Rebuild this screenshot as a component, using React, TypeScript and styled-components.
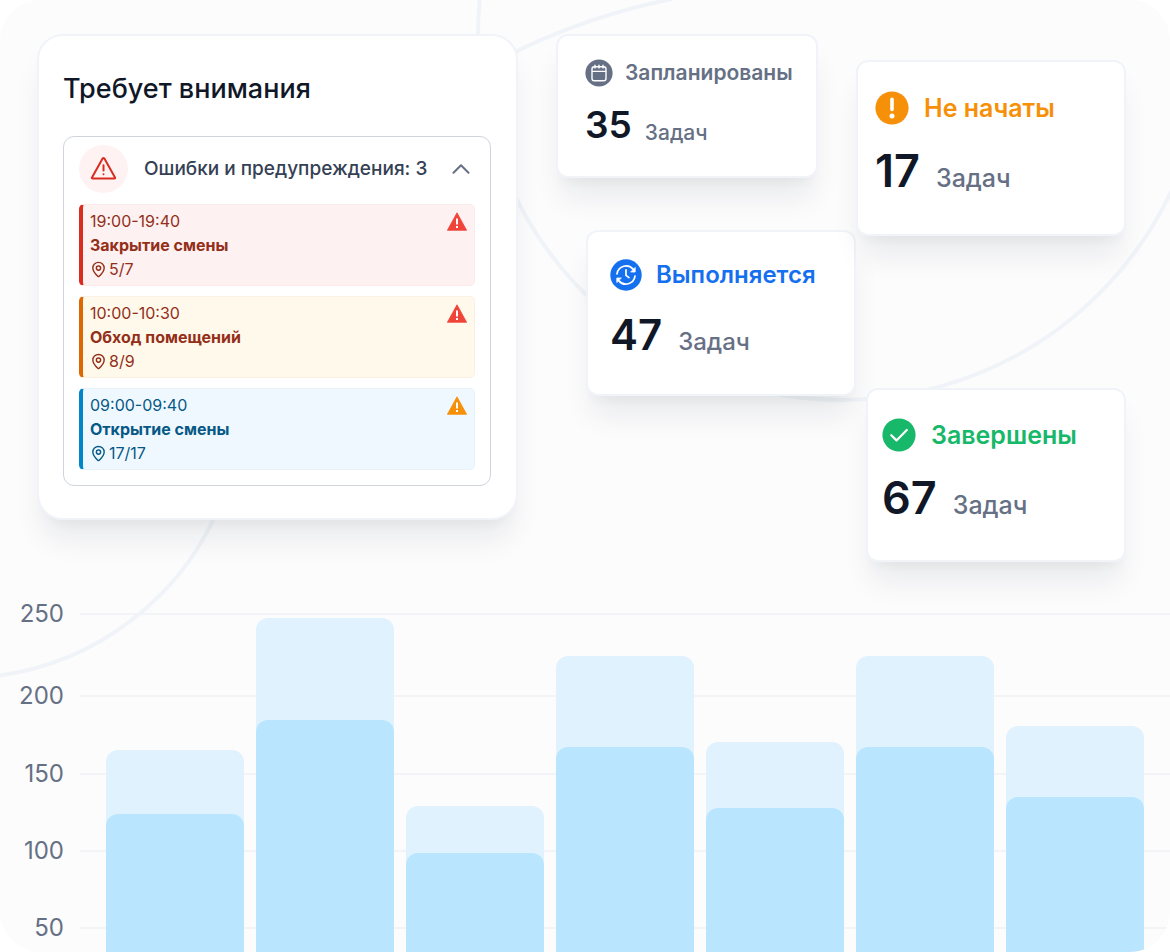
import React, { useState } from "react";
import styled, { createGlobalStyle } from "styled-components";
import { MapPin } from "lucide-react";

const GlobalStyle = createGlobalStyle`
  *, *::before, *::after { box-sizing: border-box; }
  body {
    margin: 0;
    background: #ffffff;
    font-family: Inter, "Noto Sans", sans-serif;
    color: #101828;
  }
  h2, h3, p, ul { margin: 0; padding: 0; font-weight: inherit; }
`;

const Page = styled.main`
  position: relative;
  isolation: isolate;
  min-height: 100vh;
  padding-top: 34px;
  overflow: hidden;
  background: #fcfcfd;
  border-radius: 40px;
`;

const Rings = styled.svg`
  position: absolute;
  top: 0;
  left: 0;
  z-index: -1;
  fill: none;
  stroke: #f0f4f8;
  stroke-width: 4;
`;

const Overview = styled.div`
  display: grid;
  grid-template-columns: 481fr 38fr 300fr 270fr;
  align-items: start;
  padding: 0 44px 0 37px;
`;

const Column = styled.div<{ $col: number; $top?: number; $gap: number }>`
  grid-column: ${(p) => p.$col};
  display: flex;
  flex-direction: column;
  gap: ${(p) => p.$gap}px;
  padding-top: ${(p) => p.$top ?? 0}px;
`;

const Surface = styled.section`
  background: #ffffff;
  border: 2px solid #f0f4f8;
  box-shadow: 0 24px 30px -5px rgba(16, 24, 40, 0.08),
    0 10px 10px -5px rgba(16, 24, 40, 0.03);
`;

const Attention = styled(Surface)`
  padding: 35px 25px 32px 24px;
  border-radius: 26px;
`;

const AttentionTitle = styled.h2`
  margin-bottom: 29px;
  font-size: 27px;
  line-height: 36px;
  font-weight: 500;
`;

const Panel = styled.div`
  padding: 8px 15px 15px;
  border: 1px solid #d0d5dd;
  border-radius: 11px;
`;

const PanelToggle = styled.button`
  display: flex;
  align-items: center;
  gap: 16px;
  width: 100%;
  padding: 0 5px 0 0;
  border: 0;
  background: none;
  color: #344054;
  font: 500 19px/28px Inter, "Noto Sans", sans-serif;
  text-align: left;
  white-space: nowrap;
  cursor: pointer;
`;

const ToggleLabel = styled.span`
  flex: 1;
`;

const AlertBadge = styled.span`
  display: grid;
  place-items: center;
  flex: none;
  width: 49px;
  height: 48px;
  border-radius: 50%;
  background: #fef3f2;
`;

const TaskList = styled.ul`
  display: grid;
  gap: 10px;
  margin-top: 11px;
  list-style: none;
`;

type Tone = "red" | "amber" | "blue";

const tones: Record<Tone, { bg: string; edge: string; bar: string; text: string }> = {
  red: { bg: "#fef1f1", edge: "#fcebe8", bar: "#d92d20", text: "#932f19" },
  amber: { bg: "#fff9eb", edge: "#fbf0e2", bar: "#dc6803", text: "#932f19" },
  blue: { bg: "#f0f8ff", edge: "#e7f2fb", bar: "#0086c9", text: "#065986" },
};

const TaskItem = styled.li<{ $tone: Tone }>`
  display: flex;
  justify-content: space-between;
  padding: 4px 7px;
  border: 1px solid ${(p) => tones[p.$tone].edge};
  border-left: 4px solid ${(p) => tones[p.$tone].bar};
  border-radius: 5px;
  background: ${(p) => tones[p.$tone].bg};
  color: ${(p) => tones[p.$tone].text};
  font-size: 16px;
  line-height: 24px;

  > svg {
    margin-top: 3px;
  }
`;

const TaskName = styled.h3`
  font-size: 16px;
  font-weight: 700;
`;

const TaskPlace = styled.p`
  display: flex;
  align-items: center;
  gap: 2px;
`;

type Size = "small" | "medium" | "large";

const sizes = {
  small: { icon: 28, label: 21, labelLine: 28, value: 37, valueLine: 48, unit: 21, unitLine: 32, headGap: 12, rowGap: 14, gap: 13, align: "flex-end" },
  medium: { icon: 32, label: 24, labelLine: 32, value: 42, valueLine: 52, unit: 24, unitLine: 32, headGap: 14, rowGap: 18, gap: 16, align: "baseline" },
  large: { icon: 34, label: 25, labelLine: 34, value: 45, valueLine: 56, unit: 25, unitLine: 34, headGap: 15, rowGap: 18, gap: 16, align: "baseline" },
};

const StatCard = styled(Surface)<{ $size: Size; $pad: string; $margin?: string }>`
  display: grid;
  gap: ${(p) => sizes[p.$size].rowGap}px;
  margin: ${(p) => p.$margin ?? "0"};
  padding: ${(p) => p.$pad};
  border-radius: 12px;
  white-space: nowrap;
`;

const StatHead = styled.h3<{ $size: Size; $color: string }>`
  display: flex;
  align-items: center;
  gap: ${(p) => sizes[p.$size].headGap}px;
  color: ${(p) => p.$color};
  font-size: ${(p) => sizes[p.$size].label}px;
  line-height: ${(p) => sizes[p.$size].labelLine}px;
  font-weight: 600;

  > svg {
    flex: none;
    width: ${(p) => sizes[p.$size].icon}px;
    height: ${(p) => sizes[p.$size].icon}px;
  }
`;

const StatFigure = styled.p<{ $size: Size }>`
  display: flex;
  align-items: ${(p) => sizes[p.$size].align};
  gap: ${(p) => sizes[p.$size].gap}px;
`;

const StatValue = styled.strong<{ $size: Size }>`
  font-size: ${(p) => sizes[p.$size].value}px;
  line-height: ${(p) => sizes[p.$size].valueLine}px;
  font-weight: 600;
`;

const StatUnit = styled.span<{ $size: Size }>`
  color: #667085;
  font-size: ${(p) => sizes[p.$size].unit}px;
  line-height: ${(p) => sizes[p.$size].unitLine}px;
  font-weight: 500;
`;

const Chart = styled.section`
  display: grid;
  grid-template-columns: 80px 1fr;
  margin-top: 40px;
`;

const Scale = styled.div`
  grid-area: 1 / 1 / 2 / 3;
  display: grid;
  grid-template-rows: 82px 78px 77px 77px 36px;
`;

const Tick = styled.div`
  display: grid;
  grid-template-columns: 64px 1fr;
  column-gap: 16px;
  align-items: center;
  height: 24px;
  color: #667085;
  font-size: 24px;
  line-height: 24px;
  text-align: right;

  &::after {
    content: "";
    height: 2px;
    background: #f2f4f7;
  }
`;

const Bars = styled.div`
  grid-area: 1 / 2;
  z-index: 1;
  display: flex;
  align-items: flex-end;
  gap: 12px;
  padding: 0 26px;
`;

const Bar = styled.div`
  flex: 1;
  display: flex;
  align-items: flex-end;
  border-radius: 12px 12px 0 0;
  background: #e0f2fe;
`;

const BarFill = styled.div`
  width: 100%;
  border-radius: 12px 12px 0 0;
  background: #b9e6fe;
`;

const AlertOutline = () => (
  <svg width="27" height="24" viewBox="0 0 27 24" fill="none" stroke="#d92d20" strokeWidth="2" strokeLinecap="round" strokeLinejoin="round" aria-hidden="true">
    <path d="M12.6 1.600 2 20.400Q1.500 21.500 2.700 21.500H24.300Q25.500 21.500 25 20.400L14.400 1.600Q13.500.4 12.600 1.600Z" />
    <path d="M13.500 8.300v5.200M13.500 17.300h.01" />
  </svg>
);

const AlertSolid = ({ color }: { color: string }) => (
  <svg width="20" height="19" viewBox="0 0 20 19" aria-hidden="true">
    <path d="M10 .8 19.600 18.300H.4Z" fill={color} stroke={color} strokeLinejoin="round" strokeWidth=".8" />
    <path d="M9 6.600h2v6H9zM9 14h2v2H9z" fill="#fff" />
  </svg>
);

const Chevron = ({ open }: { open: boolean }) => (
  <svg width="18" height="10" viewBox="0 0 18 10" fill="none" stroke="#667085" strokeWidth="2" strokeLinecap="round" strokeLinejoin="round" aria-hidden="true">
    <path d={open ? "M1.5 8.8 9 1.3l7.5 7.5" : "M1.5 1.3 9 8.8l7.5-7.5"} />
  </svg>
);

const CalendarIcon = () => (
  <svg viewBox="0 0 28 28" fill="none" stroke="#fff" strokeLinecap="round" aria-hidden="true">
    <circle cx="14" cy="14" r="13.6" fill="#667085" stroke="none" />
    <rect x="7" y="7.800" width="14" height="14" rx="2.200" strokeWidth="1.400" />
    <path d="M7.500 12.400h13M10 6.300v2.800M14 6.300v2.800M18 6.300v2.800" strokeWidth="1.400" />
  </svg>
);

const ExclaimIcon = () => (
  <svg viewBox="0 0 34 34" stroke="#fff" strokeLinecap="round" aria-hidden="true">
    <circle cx="17" cy="17" r="16.6" fill="#f79009" stroke="none" />
    <path d="M17 8.300v10.200" strokeWidth="3.600" />
    <circle cx="17" cy="25" r="2.500" fill="#fff" stroke="none" />
  </svg>
);

const ProgressIcon = () => (
  <svg viewBox="0 0 32 32" fill="none" stroke="#fff" strokeLinecap="round" strokeLinejoin="round" aria-hidden="true">
    <circle cx="16" cy="16" r="15.7" fill="#1570ef" stroke="none" />
    <path d="M7 14.800A9.200 9.200 0 0 1 23.300 10.400M25 17.200A9.200 9.200 0 0 1 8.700 21.600" strokeWidth="1.700" />
    <path d="M25.200 8.800v4.200h-4.200zM6.800 23.200V19h4.200z" fill="#fff" strokeWidth=".8" />
    <path d="M16 10.800v5.600l3 2.200" strokeWidth="1.700" />
  </svg>
);

const CheckIcon = () => (
  <svg viewBox="0 0 34 34" fill="none" stroke="#fff" strokeLinecap="round" strokeLinejoin="round" aria-hidden="true">
    <circle cx="17" cy="17" r="16.6" fill="#17b86a" stroke="none" />
    <path d="m9.300 17.200 5.200 5.200 10.300-10.400" strokeWidth="2.200" />
  </svg>
);

const tasks: { time: string; name: string; place: string; tone: Tone; alert: string }[] = [
  { time: "19:00-19:40", name: "Закрытие смены", place: "5/7", tone: "red", alert: "#f04438" },
  { time: "10:00-10:30", name: "Обход помещений", place: "8/9", tone: "amber", alert: "#f04438" },
  { time: "09:00-09:40", name: "Открытие смены", place: "17/17", tone: "blue", alert: "#f79009" },
];

const ticks = [250, 200, 150, 100, 50];

const bars = [
  { total: 202, done: 138 },
  { total: 334, done: 232 },
  { total: 146, done: 99 },
  { total: 296, done: 205 },
  { total: 210, done: 144 },
  { total: 296, done: 205 },
  { total: 226, done: 155 },
];

type StatProps = {
  size: Size;
  pad: string;
  margin?: string;
  color: string;
  icon: React.ReactNode;
  label: string;
  value: number;
};

const Stat = ({ size, pad, margin, color, icon, label, value }: StatProps) => (
  <StatCard $size={size} $pad={pad} $margin={margin}>
    <StatHead $size={size} $color={color}>
      {icon}
      {label}
    </StatHead>
    <StatFigure $size={size}>
      <StatValue $size={size}>{value}</StatValue>
      <StatUnit $size={size}>Задач</StatUnit>
    </StatFigure>
  </StatCard>
);

export default function App() {
  const [open, setOpen] = useState(true);

  return (
    <>
      <GlobalStyle />
      <Page>
        <Rings width="1170" height="952" viewBox="0 0 1170 952" aria-hidden="true">
          <circle cx="842" cy="36" r="364" />
          <path d="M505 57Q583 17 672-1" />
          <path d="M-4 676A281 281 0 0 0 220 505" />
        </Rings>

        <Overview>
          <Attention>
            <AttentionTitle>Требует внимания</AttentionTitle>
            <Panel>
              <PanelToggle type="button" aria-expanded={open} onClick={() => setOpen(!open)}>
                <AlertBadge>
                  <AlertOutline />
                </AlertBadge>
                <ToggleLabel>Ошибки и предупреждения: 3</ToggleLabel>
                <Chevron open={open} />
              </PanelToggle>
              {open && (
                <TaskList>
                  {tasks.map((task) => (
                    <TaskItem key={task.time} $tone={task.tone}>
                      <div>
                        <p>{task.time}</p>
                        <TaskName>{task.name}</TaskName>
                        <TaskPlace>
                          <MapPin size={17} aria-hidden="true" />
                          {task.place}
                        </TaskPlace>
                      </div>
                      <AlertSolid color={task.alert} />
                    </TaskItem>
                  ))}
                </TaskList>
              )}
            </Panel>
          </Attention>

          <Column $col={3} $gap={52}>
            <Stat size="small" pad="23px 20px 27px 27px" margin="0 38px 0 0" color="#667085" icon={<CalendarIcon />} label="Запланированы" value={35} />
            <Stat size="medium" pad="27px 20px 33px 22px" margin="0 0 0 30px" color="#1570ef" icon={<ProgressIcon />} label="Выполняется" value={47} />
          </Column>

          <Column $col={4} $top={26} $gap={152}>
            <Stat size="large" pad="29px 16px 35px 17px" color="#f79009" icon={<ExclaimIcon />} label="Не начаты" value={17} />
            <Stat size="large" pad="28px 16px 34px 14px" margin="0 0 0 10px" color="#17b86a" icon={<CheckIcon />} label="Завершены" value={67} />
          </Column>
        </Overview>

        <Chart>
          <Scale>
            {ticks.map((tick) => (
              <Tick key={tick}>{tick}</Tick>
            ))}
          </Scale>
          <Bars>
            {bars.map((bar, i) => (
              <Bar key={i} style={{ height: bar.total }}>
                <BarFill style={{ height: bar.done }} />
              </Bar>
            ))}
          </Bars>
        </Chart>
      </Page>
    </>
  );
}
